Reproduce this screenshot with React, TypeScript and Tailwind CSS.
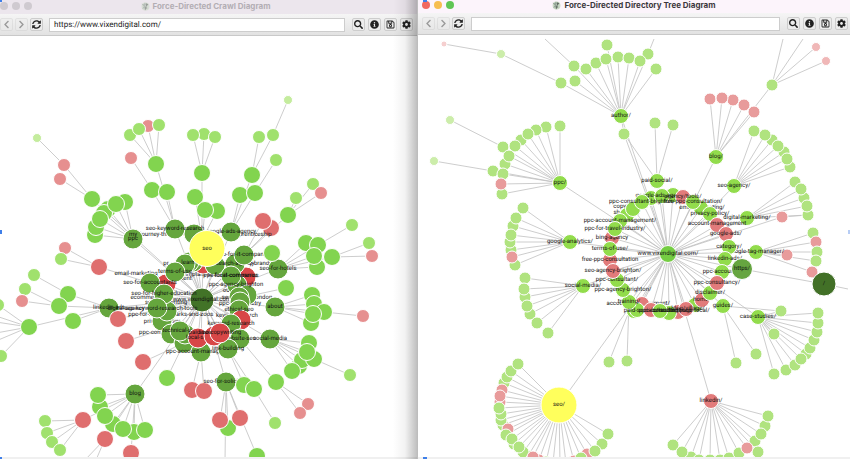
import { FaChevronLeft, FaChevronRight, FaCog, FaInfoCircle, FaRegSave, FaSearch, FaSyncAlt } from 'react-icons/fa';

type Tone = 'root' | 'g1' | 'g2' | 'g3' | 'g4' | 'r1' | 'r2' | 'r3' | 'y' | 'slash' | 'host' | 'site' | 'dir' | 'rdir' | 'leaf' | 'rleaf' | 'far' | 'rfar' | 'rtiny' | 'none';
type Point = [number, number, Tone?];
type Label = [number, number, string];
type Hub = [number, number, Tone, string?];

interface Branch {
  from: [number, number];
  to: Point[];
}

interface Graph {
  center: [number, number];
  leafTone: Tone;
  branches: Branch[];
  under: Label[];
  hubs: Hub[];
  over: Hub[];
  labels: Label[];
}

const TONES: Record<Tone, { fill: string; r: number }> = {
  root: { fill: '#427327', r: 12 },
  g1: { fill: '#65a63d', r: 10 },
  g2: { fill: '#82d44f', r: 8.5 },
  g3: { fill: '#a0e16d', r: 6.5 },
  g4: { fill: '#c4ec9d', r: 4.5 },
  r1: { fill: '#d84747', r: 10 },
  r2: { fill: '#df6e6e', r: 8.5 },
  r3: { fill: '#e68f8f', r: 6.5 },
  y: { fill: '#ffff5c', r: 18 },
  slash: { fill: '#427027', r: 12 },
  host: { fill: '#66a540', r: 10.5 },
  site: { fill: '#75cd43', r: 8.5 },
  dir: { fill: '#92dc4c', r: 7.5 },
  rdir: { fill: '#e27b7b', r: 7.5 },
  leaf: { fill: '#b0e37f', r: 6 },
  rleaf: { fill: '#e89b9b', r: 6 },
  far: { fill: '#ccedaa', r: 4.5 },
  rfar: { fill: '#f0b7b7', r: 4.5 },
  rtiny: { fill: '#f5cfcf', r: 3 },
  none: { fill: 'none', r: 0 },
};

const crawl: Graph = {
  center: [202, 299],
  leafTone: 'g2',
  branches: [
    { from: [92, 199], to: [[64, 165, 'r3'], [60, 179, 'r3']] },
    { from: [64, 165], to: [[37, 138, 'g4']] },
    { from: [133, 239], to: [[95, 235], [96, 227], [108, 209], [104, 213], [100, 219], [125, 202], [116, 204]] },
    { from: [175, 229], to: [[152, 190], [167, 192], [156, 164]] },
    { from: [152, 190], to: [[131, 158, 'r3']] },
    { from: [156, 164], to: [[130, 135, 'g3'], [148, 126, 'r3'], [139, 129, 'g3'], [159, 125, 'g3']] },
    { from: [99, 267], to: [[65, 248, 'r3'], [61, 259, 'g3']] },
    { from: [150, 283], to: [[99, 267, 'r2']] },
    { from: [202, 240], to: [[202, 173], [195, 197], [217, 211], [205, 210]] },
    { from: [202, 173], to: [[204, 134, 'g3'], [193, 135, 'g3'], [215, 137, 'g3']] },
    { from: [231, 232], to: [[252, 175], [240, 195], [255, 193]] },
    { from: [252, 175], to: [[259, 137, 'g3'], [273, 135, 'g3']] },
    { from: [273, 135], to: [[288, 100, 'g4']] },
    { from: [255, 193], to: [[276, 160, 'g3']] },
    { from: [244, 255], to: [[271, 228, 'r2'], [263, 221, 'r2'], [288, 215]] },
    { from: [288, 215], to: [[296, 198, 'g3'], [313, 184, 'g3'], [321, 193, 'r3']] },
    { from: [278, 269], to: [[306, 243], [318, 245], [317, 267], [314, 256], [332, 257]] },
    { from: [318, 245], to: [[352, 225, 'g3']] },
    { from: [332, 257], to: [[369, 243, 'g3'], [372, 256, 'r3']] },
    { from: [240, 298], to: [[286, 288]] },
    { from: [275, 307], to: [[312, 295], [314, 304], [324, 312], [311, 323], [313, 314]] },
    { from: [324, 312], to: [[363, 316, 'r3']] },
    { from: [270, 339], to: [[309, 343], [299, 366], [302, 360], [314, 359], [307, 352], [292, 371]] },
    { from: [314, 359], to: [[350, 375, 'g3']] },
    { from: [240, 339], to: [[276, 382]] },
    { from: [276, 382], to: [[308, 404, 'r3'], [300, 413, 'r3']] },
    { from: [228, 349], to: [[244, 385], [254, 389]] },
    { from: [254, 389], to: [[275, 423, 'g3']] },
    { from: [226, 382], to: [[228, 428], [220, 420, 'r2'], [257, 456], [240, 418, 'r2'], [225, 462, 'none']] },
    { from: [201, 352], to: [[192, 390, 'r2'], [204, 391, 'r2']] },
    { from: [184, 343], to: [[167, 378], [143, 362, 'r2']] },
    { from: [171, 327], to: [[126, 341, 'r2']] },
    { from: [109, 308], to: [[68, 294], [59, 306], [73, 321], [29, 327]] },
    { from: [68, 294], to: [[34, 275, 'g3']] },
    { from: [59, 306], to: [[25, 289, 'g3'], [22, 301, 'r3']] },
    { from: [29, 327], to: [[-2, 305, 'g3'], [1, 356, 'g3'], [-4, 316, 'none'], [-4, 322, 'none'], [-4, 333, 'none'], [-4, 341, 'none']] },
    { from: [135, 394], to: [[100, 407], [98, 395], [113, 424], [105, 416], [134, 432], [123, 429], [145, 430], [83, 420, 'r2'], [105, 439, 'r2'], [131, 453, 'r2']] },
    { from: [83, 420], to: [[45, 421, 'g3'], [47, 433, 'g3'], [52, 442, 'g3'], [60, 450, 'g3']] },
    { from: [105, 439], to: [[85, 460, 'none'], [96, 460, 'none']] },
  ],
  under: [
    [165, 236, 'my-journey-through-digital'],
    [136, 275, 'email-marketing'],
    [152, 299, 'ecommerce-seo'],
    [166, 304, 'seo-copywriting'],
    [146, 316, 'ppc-for-travel'],
    [187, 316, 'ppc-parks-and-zoos'],
    [162, 323, 'privacy-policy'],
    [161, 334, 'ppc-consultancy'],
    [174, 280, 'management'],
    [192, 276, 'dental-implant-seo'],
    [252, 236, 'apprenticeship'],
    [243, 265, 'seo-for-beauty-brands'],
    [247, 299, 'seo-agency-london'],
    [240, 305, 'ppc-for-industry'],
    [237, 317, 'keyword-search'],
    [235, 292, 'our-other'],
  ],
  hubs: [
    [92, 199, 'g2'],
    [133, 239, 'g1', 'ppc'],
    [175, 229, 'g1'],
    [194, 234, 'g1'],
    [203, 264, 'r1'],
    [202, 300, 'root', 'www.vixendigital.com'],
    [231, 232, 'g1', 'google-ads-agency'],
    [278, 269, 'g1', 'seo-for-hotels'],
    [275, 307, 'g1', 'about'],
    [270, 339, 'g1'],
    [109, 308, 'g1', 'linkedin-ads'],
    [118, 319, 'r2'],
    [135, 394, 'g1', 'blog'],
    [193, 262, 'g1'],
    [189, 262, 'g1'],
    [185, 264, 'g1'],
    [166, 284, 'r1'],
    [175, 272, 'g1', 'terms-of-use'],
    [150, 283, 'g1'],
    [165, 315, 'g1'],
    [162, 321, 'g1'],
    [167, 311, 'g1'],
    [164, 294, 'g1', 'seo-for-higher-education'],
    [157, 308, 'g1'],
    [171, 334, 'g1'],
    [184, 343, 'g1'],
    [185, 334, 'g1'],
    [180, 331, 'g1', 'technical-seo'],
    [215, 265, 'g1'],
    [246, 277, 'r1'],
    [235, 264, 'g1', 'search-agency'],
    [237, 285, 'g1'],
    [231, 276, 'g1', 'ppc-for-it-companies'],
    [244, 255, 'g1'],
    [247, 295, 'g1'],
    [239, 297, 'g1'],
    [240, 302, 'g1'],
    [239, 310, 'g1'],
    [241, 320, 'r1'],
    [231, 324, 'g1', 'keyword-research'],
    [240, 339, 'g1', 'website-seo'],
    [201, 352, 'g1', 'ppc-account-management'],
    [228, 349, 'g1', 'link-building'],
    [198, 338, 'r1', 'local-seo'],
    [214, 336, 'r1'],
    [220, 333, 'r1', 'seo-copywriting'],
    [226, 382, 'g1', 'seo-for-solicitors'],
  ],
  over: [
    [207, 248.5, 'y', 'seo'],
    [272, 253, 'g2'],
    [244, 385, 'g2'],
    [254, 389, 'g2'],
  ],
  labels: [
    [175, 230, 'seo-keyword-research'],
    [133, 236, 'my'],
    [150, 284, 'seo-for-accountants'],
    [161, 310, 'seo-keyword-research-tools'],
    [126, 310, 'digital-agency'],
    [270, 340, 'social-media'],
    [244, 256, 'seo-for-it-companies'],
    [239, 311, 'ethical-seo'],
    [236, 277, 'local-commerce'],
    [236, 286, 'ppc-agency-brighton'],
    [188, 264, 'learn'],
    [166, 265, 'pr'],
    [200, 334, 'paid-seo'],
  ],
};

const directory: Graph = {
  center: [668, 254],
  leafTone: 'leaf',
  branches: [
    { from: [621, 116], to: [[561, 83], [575, 81], [574, 66], [586, 69], [596, 63], [607, 45], [606, 59], [618, 57], [629, 58], [648, 54], [640, 61], [656, 69], [624, 134]] },
    { from: [624, 134], to: [[657, 181, 'none'], [668, 254, 'none']] },
    { from: [561, 83], to: [[501, 54, 'far']] },
    { from: [501, 54], to: [[444, 44, 'rtiny']] },
    { from: [574, 66], to: [[545, 39, 'none']] },
    { from: [648, 54], to: [[654, 39, 'none']] },
    { from: [560, 183], to: [[560, 126], [546, 127], [536, 130], [521, 140], [528, 134], [503, 147], [515, 146], [505, 164], [509, 156], [493, 171], [503, 174], [502, 194], [501, 184, 'rleaf']] },
    { from: [503, 147], to: [[450, 120, 'far']] },
    { from: [493, 171], to: [[434, 161, 'far']] },
    { from: [570, 242], to: [[523, 208], [513, 226], [516, 218], [511, 250], [510, 242], [511, 235], [515, 265], [512, 257, 'rleaf']] },
    { from: [583, 286], to: [[525, 278], [525, 297], [524, 289], [530, 314], [527, 306], [537, 323], [548, 333]] },
    { from: [632, 304], to: [[609, 362]] },
    { from: [629, 302], to: [[627, 361]] },
    { from: [668, 254], to: [[559, 405, 'none'], [782, 217, 'none']] },
    { from: [559, 405], to: [[504, 383], [507, 377], [511, 371], [518, 364], [500, 402, 'rleaf'], [502, 390, 'rleaf'], [500, 396, 'rleaf'], [503, 425], [501, 420], [501, 414], [499, 408], [508, 429, 'rleaf'], [506, 435], [514, 444], [512, 439], [528, 456], [523, 452], [519, 447], [539, 460, 'rleaf'], [533, 457, 'rleaf'], [546, 462], [553, 463, 'none'], [560, 463, 'none'], [566, 463, 'none'], [574, 461, 'rleaf'], [587, 454, 'rleaf'], [581, 458], [602, 444], [595, 451], [608, 434]] },
    { from: [657, 181], to: [[655, 123], [673, 125]] },
    { from: [716, 157], to: [[710, 99, 'rleaf'], [733, 100, 'rleaf'], [722, 98, 'rleaf'], [744, 105, 'rleaf'], [772, 85], [754, 112, 'rleaf']] },
    { from: [772, 85], to: [[816, 47, 'rfar'], [826, 61, 'rfar'], [783, 39, 'none'], [803, 39, 'none']] },
    { from: [734, 186], to: [[754, 131], [772, 140], [765, 135], [784, 152], [778, 146], [790, 167], [787, 159]] },
    { from: [747, 218], to: [[795, 182], [804, 198], [801, 189], [808, 215], [807, 206]] },
    { from: [782, 217], to: [[782, 217, 'rleaf'], [808, 215, 'none']] },
    { from: [756, 252], to: [[813, 233], [816, 242, 'rleaf'], [817, 252], [816, 261], [812, 272, 'rleaf'], [787, 255, 'rleaf']] },
    { from: [824, 284], to: [[742, 269, 'none'], [848, 289, 'none']] },
    { from: [758, 317], to: [[781, 311], [774, 334], [774, 374], [786, 370], [795, 365], [806, 354], [801, 359], [810, 348], [814, 340], [817, 332], [818, 323], [818, 313]] },
    { from: [723, 306], to: [[736, 363], [756, 354], [781, 311, 'none']] },
    { from: [711, 401], to: [[673, 445], [691, 457], [682, 452], [699, 460], [710, 460], [720, 460], [729, 458], [739, 453], [765, 426], [768, 416], [755, 441], [761, 434], [758, 452], [747, 448, 'rleaf']] },
  ],
  under: [
    [630, 208, 'copywriting/'],
    [627, 214, 'shopping/'],
    [702, 209, 'email-marketing/'],
    [651, 305, 'management/'],
    [620, 305, 'accounts/'],
  ],
  hubs: [
    [621, 116, 'dir', 'author/'],
    [560, 183, 'dir', 'ppc/'],
    [570, 242, 'dir', 'google-analytics/'],
    [583, 286, 'dir', 'social-media/'],
    [657, 181, 'dir', 'paid-social/'],
    [716, 157, 'dir', 'blog/'],
    [734, 186, 'dir', 'seo-agency/'],
    [747, 218, 'dir', 'digital-marketing/'],
    [756, 252, 'dir', 'google-tag-manager/'],
    [758, 317, 'dir', 'case-studies/'],
    [723, 306, 'dir', 'guides/'],
    [711, 401, 'rdir', 'linkedin/'],
    [668, 254, 'site', 'www.vixendigital.com/'],
    [627, 215, 'dir'],
    [633, 209, 'dir'],
    [651, 198, 'dir'],
    [673, 195, 'dir'],
    [662, 196, 'dir', 'google-ads-agency/'],
    [683, 197, 'rdir'],
    [642, 202, 'dir', 'ppc-consultant-brighton/'],
    [701, 208, 'dir'],
    [693, 202, 'dir', 'free-ppc-consultation/'],
    [710, 214, 'dir', 'privacy-policy/'],
    [717, 225, 'rdir'],
    [726, 234, 'rdir', 'google-ads/'],
    [729, 247, 'dir', 'category/'],
    [725, 259, 'dir', 'linkedin-ads/'],
    [722, 272, 'dir', 'ppc-accounts/'],
    [695, 305, 'dir'],
    [702, 300, 'rdir', 'home/'],
    [710, 293, 'dir', 'disclaimer/'],
    [717, 283, 'rdir', 'ppc-consultancy/'],
    [642, 304, 'rdir'],
    [634, 311, 'dir'],
    [637, 310, 'dir'],
    [651, 310, 'rdir'],
    [678, 312, 'rdir'],
    [686, 309, 'rdir'],
    [669, 313, 'dir'],
    [660, 311, 'dir', 'ppc-consultant/'],
    [629, 302, 'dir', 'training/'],
    [623, 290, 'dir', 'ppc-agency-brighton/'],
    [617, 280, 'dir', 'ppc-consultant/'],
    [610, 260, 'rdir'],
    [613, 271, 'rdir', 'seo-agency-brighton/'],
    [612, 238, 'rdir', 'bing-agency'],
    [610, 249, 'dir', 'terms-of-use/'],
    [620, 221, 'dir', 'ppc-account-management/'],
    [615, 229, 'dir', 'ppc-for-travel-industry/'],
  ],
  over: [
    [742, 269, 'host', 'https/'],
    [824, 284, 'slash', '/'],
    [559, 405, 'y', 'seo/'],
  ],
  labels: [
    [610, 261, 'free-ppc-consultation'],
    [717, 225, 'account-management'],
    [641, 312, 'paid-socials/'],
    [684, 312, 'landing-page-local/'],
    [688, 310, 'blog/village/'],
    [672, 312, 'consultant-seo'],
    [683, 198, 'agency/tools/'],
  ],
};

function Node({ hub: [x, y, tone, label] }: { hub: Hub }) {
  return (
    <g>
      <circle cx={x} cy={y} r={TONES[tone].r} fill={TONES[tone].fill} stroke="#fff" strokeWidth={1} />
      {label && <text x={x} y={y + 1}>{label}</text>}
    </g>
  );
}

function Diagram({ graph, viewBox, title }: { graph: Graph; viewBox: string; title: string }) {
  const [cx, cy] = graph.center;
  return (
    <svg viewBox={viewBox} preserveAspectRatio="xMinYMin slice" className="block h-full w-full" role="img" aria-label={title}>
      <g stroke="#c0c0c0" strokeWidth={0.8}>
        {graph.hubs.concat(graph.over.filter((h) => h[2] === 'host')).map(([x, y], i) => (
          <line key={i} x1={cx} y1={cy} x2={x} y2={y} />
        ))}
        {graph.branches.map((b) => b.to.map(([x, y], i) => (
          <line key={`${b.from}-${i}`} x1={b.from[0]} y1={b.from[1]} x2={x} y2={y} />
        )))}
      </g>
      <g fill="#111" fontSize={6} textAnchor="middle" textRendering="geometricPrecision" fontFamily="Roboto, 'Liberation Sans', sans-serif">
        {graph.branches.map((b) => b.to.map(([x, y, tone], i) => (
          tone !== 'none' && <Node key={`${b.from}-${i}`} hub={[x, y, tone ?? graph.leafTone]} />
        )))}
        {graph.under.map(([x, y, t]) => <text key={t} x={x} y={y}>{t}</text>)}
        {graph.hubs.map((h, i) => <Node key={i} hub={h} />)}
        {graph.labels.map(([x, y, t]) => <text key={t} x={x} y={y}>{t}</text>)}
        {graph.over.map((h, i) => <Node key={i} hub={h} />)}
      </g>
    </svg>
  );
}

function SpiderLogo({ faded }: { faded: boolean }) {
  return (
    <svg viewBox="0 0 16 16" className={`h-[9px] w-[9px] ${faded ? 'opacity-60' : ''}`} aria-hidden="true">
      <path d="M8 1a7 7 0 1 0 .1 14A7 7 0 0 0 8 1Z" fill="#c9d8c4" />
      <path d="M1 3l4 1 2-3 2 3-2 3 5-2-2 4 2 2-4 1-1 3-1-4-4 1 3-4Z" fill="#93a396" />
      <path d="M9 2l4 2-4 4ZM7 9l3 1-2 5Z" fill="#5b655c" />
    </svg>
  );
}

const BUTTON = 'flex h-[13px] w-[13px] shrink-0 items-center justify-center rounded-xs border border-[#cdcdcd] bg-[#ececec] text-[9px] text-[#222]';

interface WindowProps {
  title: string;
  url: string;
  active: boolean;
  graph: Graph;
  viewBox: string;
}

function AppWindow({ title, url, active, graph, viewBox }: WindowProps) {
  const lights = active ? ['bg-[#f0695f]', 'bg-[#f6be50]', 'bg-[#60c655]'] : ['bg-[#cfcad0]', 'bg-[#cfcad0]', 'bg-[#cfcad0]'];
  return (
    <section className="relative flex min-w-0 flex-col overflow-hidden bg-white">
      <header className={`relative flex shrink-0 items-center justify-center pb-0.5 ${active ? 'h-[13px] bg-[#fcf4fb]' : 'h-[14px] bg-[#ece6ed]'}`}>
        <div className={`absolute flex gap-1 ${active ? 'top-px left-1' : 'top-0.5 left-0'}`}>
          {lights.map((c, i) => <span key={i} className={`h-2 w-2 rounded-full ${c}`} />)}
        </div>
        <h1 className={`flex items-center gap-[3px] font-[Inter,sans-serif] text-[8px] leading-[11px] font-bold whitespace-nowrap ${active ? 'text-[#3d383d]' : 'mr-1.5 text-[#b3aeb4]'}`}>
          <SpiderLogo faded={!active} />
          {title}
        </h1>
      </header>
      <div className={`flex h-[22px] shrink-0 items-center border-b border-[#c9c9c9] bg-linear-to-b from-[#f5f5f5] to-[#e2e2e2] ${active ? 'pr-0.5 pl-1' : 'pr-1'}`}>
        <div className="flex gap-0.5">
          <button type="button" aria-label="Back" disabled className={`${BUTTON} opacity-40`}><FaChevronLeft /></button>
          <button type="button" aria-label="Forward" disabled className={`${BUTTON} opacity-40`}><FaChevronRight /></button>
          <button type="button" aria-label="Refresh" className={BUTTON}><FaSyncAlt /></button>
        </div>
        <input
          type="text"
          aria-label="URL"
          defaultValue={url}
          className="mr-[7px] ml-1.5 h-[14px] min-w-0 flex-1 border border-[#cdcdcd] bg-white px-1 font-[Roboto,sans-serif] text-[8px] leading-[11px] text-[#222] outline-none [text-rendering:geometricPrecision]"
        />
        <div className="flex gap-[3px]">
          <button type="button" aria-label="Search" className={BUTTON}><FaSearch /></button>
          <button type="button" aria-label="Info" className={BUTTON}><FaInfoCircle /></button>
          <button type="button" aria-label="Save" className={BUTTON}><FaRegSave /></button>
          <button type="button" aria-label="Settings" className={BUTTON}><FaCog /></button>
        </div>
      </div>
      <div className="min-h-0 flex-1 overflow-hidden border-b-2 border-[#f0f0f0]">
        <Diagram graph={graph} viewBox={viewBox} title={title} />
      </div>
    </section>
  );
}

export default function App() {
  return (
    <main className="relative grid h-screen grid-cols-[418fr_432fr] overflow-hidden bg-white">
      <div className="relative grid min-h-0 border-r border-[#bdbdbd]">
        <AppWindow title="Force-Directed Crawl Diagram" url="https://www.vixendigital.com/" active={false} graph={crawl} viewBox="0 36 417 421" />
        <div className="pointer-events-none absolute inset-y-0 right-0 w-6 bg-linear-to-r from-transparent via-black/5 to-black/25" />
      </div>
      <AppWindow title="Force-Directed Directory Tree Diagram" url="" active graph={directory} viewBox="418 35 432 422" />
      <span className="absolute top-0 left-0 h-0.5 w-0.5 bg-[#3f7fe8]" />
      <span className="absolute top-1/2 left-0 h-1 w-0.5 bg-[#3f7fe8]" />
      <span className="absolute bottom-0 left-0 h-0.5 w-0.5 bg-[#3f7fe8]" />
      <span className="absolute top-0 left-1/2 h-0.5 w-1 -translate-x-1/2 bg-[#3f7fe8]" />
      <span className="absolute bottom-0 left-1/2 h-0.5 w-1 -translate-x-1/2 bg-[#3f7fe8]" />
      <span className="absolute top-1/2 right-0 h-1 w-0.5 bg-[#b7cdf5]" />
    </main>
  );
}
